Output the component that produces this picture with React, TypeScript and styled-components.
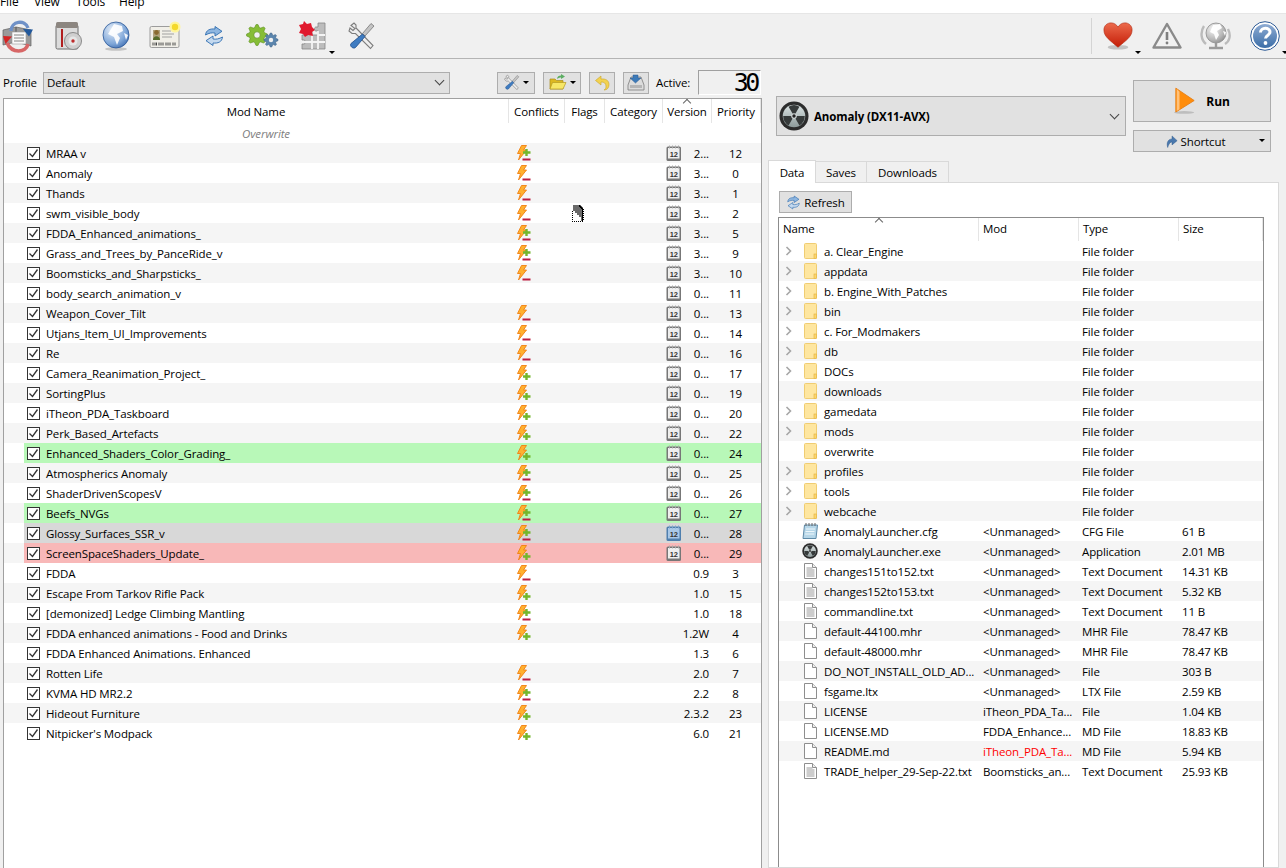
import React from 'react';
import styled, { createGlobalStyle } from 'styled-components';

const GlobalStyle = createGlobalStyle`
  html, body {
    margin: 0;
    height: 868px;
    overflow: hidden;
    background: #f0f0f0;
  }
  body {
    font-family: "Open Sans", "Noto Sans", "Liberation Sans", sans-serif;
    font-size: 11.5px;
    letter-spacing: -0.12px;
    color: #000;
  }
`;

type ConflictKind = 'both' | 'minus' | 'plus' | 'none';
type Tone = 'green' | 'grey' | 'red';

interface ModRow {
  name: string;
  conflict: ConflictKind;
  version: string;
  priority: number;
  dated?: boolean;
  tone?: Tone;
}

const mods: ModRow[] = [
  { name: 'MRAA v', conflict: 'both', version: '2...', priority: 12, dated: true },
  { name: 'Anomaly', conflict: 'minus', version: '3...', priority: 0, dated: true },
  { name: 'Thands', conflict: 'minus', version: '3...', priority: 1, dated: true },
  { name: 'swm_visible_body', conflict: 'minus', version: '3...', priority: 2, dated: true },
  { name: 'FDDA_Enhanced_animations_', conflict: 'both', version: '3...', priority: 5, dated: true },
  { name: 'Grass_and_Trees_by_PanceRide_v', conflict: 'both', version: '3...', priority: 9, dated: true },
  { name: 'Boomsticks_and_Sharpsticks_', conflict: 'minus', version: '3...', priority: 10, dated: true },
  { name: 'body_search_animation_v', conflict: 'none', version: '0...', priority: 11, dated: true },
  { name: 'Weapon_Cover_Tilt', conflict: 'minus', version: '0...', priority: 13, dated: true },
  { name: 'Utjans_Item_UI_Improvements', conflict: 'minus', version: '0...', priority: 14, dated: true },
  { name: 'Re', conflict: 'minus', version: '0...', priority: 16, dated: true },
  { name: 'Camera_Reanimation_Project_', conflict: 'plus', version: '0...', priority: 17, dated: true },
  { name: 'SortingPlus', conflict: 'plus', version: '0...', priority: 19, dated: true },
  { name: 'iTheon_PDA_Taskboard', conflict: 'plus', version: '0...', priority: 20, dated: true },
  { name: 'Perk_Based_Artefacts', conflict: 'plus', version: '0...', priority: 22, dated: true },
  { name: 'Enhanced_Shaders_Color_Grading_', conflict: 'plus', version: '0...', priority: 24, dated: true, tone: 'green' },
  { name: 'Atmospherics Anomaly', conflict: 'both', version: '0...', priority: 25, dated: true },
  { name: 'ShaderDrivenScopesV', conflict: 'both', version: '0...', priority: 26, dated: true },
  { name: 'Beefs_NVGs', conflict: 'both', version: '0...', priority: 27, dated: true, tone: 'green' },
  { name: 'Glossy_Surfaces_SSR_v', conflict: 'both', version: '0...', priority: 28, dated: true, tone: 'grey' },
  { name: 'ScreenSpaceShaders_Update_', conflict: 'plus', version: '0...', priority: 29, dated: true, tone: 'red' },
  { name: 'FDDA', conflict: 'minus', version: '0.9', priority: 3 },
  { name: 'Escape From Tarkov Rifle Pack', conflict: 'plus', version: '1.0', priority: 15 },
  { name: '[demonized] Ledge Climbing Mantling', conflict: 'both', version: '1.0', priority: 18 },
  { name: 'FDDA enhanced animations - Food and Drinks', conflict: 'plus', version: '1.2W', priority: 4 },
  { name: 'FDDA Enhanced Animations. Enhanced', conflict: 'none', version: '1.3', priority: 6 },
  { name: 'Rotten Life', conflict: 'minus', version: '2.0', priority: 7 },
  { name: 'KVMA HD MR2.2', conflict: 'both', version: '2.2', priority: 8 },
  { name: 'Hideout Furniture', conflict: 'plus', version: '2.3.2', priority: 23 },
  { name: "Nitpicker's Modpack", conflict: 'plus', version: '6.0', priority: 21 },
];

type FileKind = 'folder' | 'folderOpenable' | 'cfg' | 'exe' | 'text' | 'blank';

interface FileRow {
  name: string;
  kind: FileKind;
  mod?: string;
  type: string;
  size?: string;
  modRed?: boolean;
}

const folder = (name: string, expandable = true): FileRow => ({
  name,
  kind: expandable ? 'folderOpenable' : 'folder',
  type: 'File folder',
});

const files: FileRow[] = [
  folder('a. Clear_Engine'),
  folder('appdata'),
  folder('b. Engine_With_Patches'),
  folder('bin'),
  folder('c. For_Modmakers'),
  folder('db'),
  folder('DOCs'),
  folder('downloads', false),
  folder('gamedata'),
  folder('mods'),
  folder('overwrite', false),
  folder('profiles'),
  folder('tools'),
  folder('webcache'),
  { name: 'AnomalyLauncher.cfg', kind: 'cfg', mod: '<Unmanaged>', type: 'CFG File', size: '61 B' },
  { name: 'AnomalyLauncher.exe', kind: 'exe', mod: '<Unmanaged>', type: 'Application', size: '2.01 MB' },
  { name: 'changes151to152.txt', kind: 'text', mod: '<Unmanaged>', type: 'Text Document', size: '14.31 KB' },
  { name: 'changes152to153.txt', kind: 'text', mod: '<Unmanaged>', type: 'Text Document', size: '5.32 KB' },
  { name: 'commandline.txt', kind: 'text', mod: '<Unmanaged>', type: 'Text Document', size: '11 B' },
  { name: 'default-44100.mhr', kind: 'blank', mod: '<Unmanaged>', type: 'MHR File', size: '78.47 KB' },
  { name: 'default-48000.mhr', kind: 'blank', mod: '<Unmanaged>', type: 'MHR File', size: '78.47 KB' },
  { name: 'DO_NOT_INSTALL_OLD_AD...', kind: 'blank', mod: '<Unmanaged>', type: 'File', size: '303 B' },
  { name: 'fsgame.ltx', kind: 'blank', mod: '<Unmanaged>', type: 'LTX File', size: '2.59 KB' },
  { name: 'LICENSE', kind: 'blank', mod: 'iTheon_PDA_Ta...', type: 'File', size: '1.04 KB' },
  { name: 'LICENSE.MD', kind: 'blank', mod: 'FDDA_Enhance...', type: 'MD File', size: '18.83 KB' },
  { name: 'README.md', kind: 'blank', mod: 'iTheon_PDA_Ta...', modRed: true, type: 'MD File', size: '5.94 KB' },
  { name: 'TRADE_helper_29-Sep-22.txt', kind: 'text', mod: 'Boomsticks_an...', type: 'Text Document', size: '25.93 KB' },
];

const toneColors: Record<Tone, string> = {
  green: '#b8f8b8',
  grey: '#d8d8d8',
  red: '#f8b8b8',
};

const Page = styled.div`
  height: 868px;
  overflow: hidden;
  display: flex;
  flex-direction: column;
`;

const MenuBar = styled.div`
  height: 13px;
  flex: none;
  background: #fff;
  display: flex;
  align-items: flex-end;
  overflow: hidden;
  line-height: 16px;
`;

const MenuItem = styled.span<{ $w: number }>`
  width: ${(p) => p.$w}px;
  flex: none;
  padding-bottom: 3px;
  font-size: 12px;
`;

const Toolbar = styled.div`
  height: 44px;
  flex: none;
  display: flex;
  align-items: center;
  border-top: 1px solid #e6e6e6;
  border-bottom: 1px solid #b4b4b4;
`;

const ToolGroup = styled.div`
  display: flex;
  margin-left: -7px;
  flex: 1;
`;

const ToolButton = styled.div`
  position: relative;
  width: 49px;
  height: 38px;
  flex: none;
  display: flex;
  align-items: center;
  justify-content: center;
`;

const MenuCaret = styled.span`
  position: absolute;
  right: 1px;
  bottom: 1px;
  width: 0;
  height: 0;
  border-left: 3px solid transparent;
  border-right: 3px solid transparent;
  border-top: 3px solid #000;
`;

const ToolDivider = styled.div`
  width: 1px;
  height: 36px;
  background: #d4d4d4;
  margin-right: 1px;
`;

const RightTools = styled.div`
  display: flex;
  align-items: center;
  margin-right: -3px;
`;

const Main = styled.div`
  flex: 1;
  display: flex;
  min-height: 0;
  padding-left: 3px;
`;

const LeftColumn = styled.div`
  width: 759px;
  flex: none;
  display: flex;
  flex-direction: column;
  padding-top: 11px;
`;

const ProfileRow = styled.div`
  height: 25px;
  display: flex;
  align-items: center;
  flex: none;
  margin-bottom: 3px;
`;

const ProfileLabel = styled.span`
  width: 40px;
  flex: none;
`;

const Select = styled.div`
  width: 407px;
  height: 22px;
  box-sizing: border-box;
  flex: none;
  background: #e1e1e1;
  border: 1px solid #adadad;
  display: flex;
  align-items: center;
  justify-content: space-between;
  padding: 0 6px 0 3px;
`;

const ChevronMark = styled.span`
  width: 6px;
  height: 6px;
  border-right: 1px solid #444;
  border-bottom: 1px solid #444;
  transform: translateY(-2px) rotate(45deg);
`;

const SquareButton = styled.div<{ $w: number; $ml: number }>`
  width: ${(p) => p.$w}px;
  margin-left: ${(p) => p.$ml}px;
  height: 22px;
  box-sizing: border-box;
  flex: none;
  background: #e1e1e1;
  border: 1px solid #adadad;
  display: flex;
  align-items: center;
  justify-content: center;
  gap: 3px;
`;

const DropCaret = styled.span`
  width: 0;
  height: 0;
  border-left: 3px solid transparent;
  border-right: 3px solid transparent;
  border-top: 3px solid #000;
`;

const ActiveLabel = styled.span`
  margin-left: 7px;
  width: 42px;
  flex: none;
`;

const ActiveCount = styled.div`
  width: 63px;
  height: 25px;
  box-sizing: border-box;
  flex: none;
  border: 1px solid #a0a0a0;
  border-right-color: #fff;
  border-bottom-color: #fff;
  display: flex;
  align-items: center;
  justify-content: flex-end;
  overflow: hidden;
  padding-right: 3px;
  font-family: "DejaVu Sans Mono", monospace;
  font-size: 25px;
  letter-spacing: -3.4px;
  line-height: 25px;
`;

const ModList = styled.div`
  flex: 1;
  background: #fff;
  border: 1px solid #a0a0a0;
  border-bottom: none;
`;

const ModGrid = styled.div`
  display: grid;
  grid-template-columns: 505px 56px 40px 58px 49px 49px;
`;

const HeaderCell = styled.div<{ $sorted?: boolean }>`
  position: relative;
  height: 24px;
  display: flex;
  align-items: center;
  justify-content: center;
  border-right: 1px solid #e5e5e5;
  box-sizing: border-box;
  ${(p) =>
    p.$sorted
      ? `&::before {
    content: '';
    position: absolute;
    top: 1px;
    left: 50%;
    width: 5px;
    height: 5px;
    margin-left: -3px;
    border-left: 1px solid #666;
    border-top: 1px solid #666;
    transform: rotate(45deg);
  }`
      : ''}
`;

const OverwriteRow = styled.div`
  height: 20px;
  margin-left: 20px;
  width: 484px;
  display: flex;
  align-items: center;
  justify-content: center;
  font-style: italic;
  color: #808080;
`;

const ModStripe = styled.div<{ $odd: boolean }>`
  height: 20px;
  padding-left: 20px;
  background: ${(p) => (p.$odd ? '#f5f5f5' : '#fff')};
`;

const ModCells = styled.div<{ $tone?: Tone }>`
  height: 20px;
  display: grid;
  grid-template-columns: 484px 56px 40px 58px 49px 49px;
  align-items: center;
  background: ${(p) => (p.$tone ? toneColors[p.$tone] : 'transparent')};
`;

const NameCell = styled.div`
  display: flex;
  align-items: center;
  padding-left: 3px;
  gap: 6px;
  white-space: nowrap;
`;

const CheckBox = styled.span`
  width: 13px;
  height: 13px;
  box-sizing: border-box;
  border: 1px solid #333;
  background: #fff;
  flex: none;
  display: flex;
`;

const ConflictCell = styled.div`
  padding-left: 8px;
  display: flex;
`;

const VersionCell = styled.div<{ $dated: boolean }>`
  display: flex;
  align-items: center;
  justify-content: ${(p) => (p.$dated ? 'space-between' : 'flex-end')};
  padding: 0 2px 0 4px;
`;

const PriorityCell = styled.div`
  text-align: center;
`;

const BusyCursor = styled.div`
  position: absolute;
  left: 571px;
  top: 205px;
  display: flex;
`;

const RightColumn = styled.div`
  width: 511px;
  margin-left: 6px;
  flex: none;
  display: flex;
  flex-direction: column;
  padding-top: 21px;
`;

const RunArea = styled.div`
  display: flex;
  height: 72px;
  flex: none;
  padding-left: 8px;
  margin-bottom: 8px;
`;

const ExecutableSelect = styled.div`
  width: 350px;
  height: 40px;
  box-sizing: border-box;
  margin-top: 16px;
  flex: none;
  background: #e1e1e1;
  border: 1px solid #adadad;
  display: flex;
  align-items: center;
  padding: 0 7px 0 2px;
  gap: 5px;
  font-weight: 700;
  font-size: 11.5px;
`;

const ExecutableName = styled.span`
  flex: 1;
`;

const RunStack = styled.div`
  width: 138px;
  margin-left: 7px;
  flex: none;
  display: flex;
  flex-direction: column;
  gap: 8px;
`;

const RunButton = styled.div`
  height: 42px;
  box-sizing: border-box;
  background: #e1e1e1;
  border: 1px solid #adadad;
  display: flex;
  align-items: center;
  justify-content: center;
  gap: 10px;
  font-weight: 700;
  font-size: 12px;
`;

const ShortcutButton = styled.div`
  position: relative;
  height: 22px;
  box-sizing: border-box;
  background: #e1e1e1;
  border: 1px solid #adadad;
  display: flex;
  align-items: center;
  justify-content: center;
  gap: 3px;
  padding-right: 13px;
`;

const ShortcutCaret = styled(DropCaret)`
  position: absolute;
  right: 5px;
  top: 8px;
`;

const Tabs = styled.div`
  display: flex;
  height: 23px;
  flex: none;
  align-items: flex-end;
  position: relative;
  margin-bottom: -1px;
`;

const Tab = styled.div<{ $active?: boolean; $w: number }>`
  width: ${(p) => p.$w}px;
  height: ${(p) => (p.$active ? 23 : 22)}px;
  box-sizing: border-box;
  display: flex;
  align-items: center;
  justify-content: center;
  border: 1px solid #d9d9d9;
  border-left: ${(p) => (p.$active ? '1px solid #d9d9d9' : 'none')};
  border-bottom: ${(p) => (p.$active ? 'none' : '1px solid #d9d9d9')};
  background: ${(p) => (p.$active ? '#fff' : '#f0f0f0')};
  position: relative;
  z-index: ${(p) => (p.$active ? 1 : 0)};
`;

const TabPane = styled.div`
  flex: 1;
  background: #fff;
  border: 1px solid #d9d9d9;
  padding: 8px 14px 0 9px;
  display: flex;
  flex-direction: column;
`;

const RefreshButton = styled.div`
  width: 73px;
  height: 22px;
  box-sizing: border-box;
  flex: none;
  background: #e1e1e1;
  border: 1px solid #adadad;
  display: flex;
  align-items: center;
  justify-content: center;
  gap: 3px;
  margin: 0 0 4px 1px;
`;

const FileTree = styled.div`
  flex: 1;
  border: 1px solid #8c8c8c;
  border-bottom: none;
`;

const FileGrid = styled.div`
  display: grid;
  grid-template-columns: 200px 100px 100px 1fr;
`;

const TreeHeader = styled.div<{ $sorted?: boolean }>`
  position: relative;
  height: 23px;
  box-sizing: border-box;
  padding-left: 4px;
  display: flex;
  align-items: flex-end;
  padding-bottom: 5px;
  border-right: 1px solid #e5e5e5;
  ${(p) =>
    p.$sorted
      ? `&::before {
    content: '';
    position: absolute;
    top: 1px;
    left: 97px;
    width: 5px;
    height: 5px;
    border-left: 1px solid #666;
    border-top: 1px solid #666;
    transform: rotate(45deg);
  }`
      : ''}
`;

const FileRowLine = styled.div<{ $odd: boolean }>`
  height: 20px;
  display: grid;
  grid-template-columns: 199px 100px 100px 1fr;
  align-items: center;
  background: ${(p) => (p.$odd ? '#f5f5f5' : '#fff')};
`;

const FileName = styled.div`
  display: flex;
  align-items: center;
  white-space: nowrap;
`;

const Twisty = styled.span`
  width: 25px;
  flex: none;
  display: flex;
  padding-left: 6px;
  box-sizing: border-box;
`;

const FileIconBox = styled.span`
  width: 20px;
  flex: none;
  display: flex;
`;

const OffsetIcon = styled.span`
  margin-left: -2px;
  display: flex;
`;

const FileCell = styled.div<{ $red?: boolean; $pad: number }>`
  padding-left: ${(p) => p.$pad}px;
  color: ${(p) => (p.$red ? '#ff0000' : '#000')};
  white-space: nowrap;
`;

const ConflictIcon = ({ kind }: { kind: ConflictKind }) => {
  if (kind === 'none') return <svg width="15" height="16" />;
  return (
    <svg width="15" height="16" viewBox="0 0 15 16">
      <polygon points="5.500,0.500 10.500,0.500 7.500,5 10.500,5 2.500,15 4.500,8.500 1.500,8.500" fill="#ffb02e" stroke="#f07f12" strokeWidth="0.9" />
      {kind !== 'plus' && <rect x="6.500" y="13.500" width="8" height="2" fill="#bd1d3f" />}
      {kind === 'both' && <path d="M10.500 4v7M7 7.500h7.500" stroke="#74b62c" strokeWidth="2.400" />}
      {kind === 'plus' && <path d="M10.500 8v7M7 11.500h7.500" stroke="#74b62c" strokeWidth="2.400" />}
    </svg>
  );
};

const CalendarIcon = ({ selected }: { selected: boolean }) => (
  <svg width="16" height="17" viewBox="0 0 16 17">
    <rect x="0.500" y="1.500" width="14.500" height="14.500" rx="1.500" fill={selected ? '#4f7fae' : '#777'} />
    <rect x="2" y="3" width="11.500" height="10.500" fill={selected ? '#a9c8e8' : '#efefef'} />
    <path d="M3.500 .5v3M6.500 .5v3M9.500 .5v3M12.500 .5v3" stroke={selected ? '#7fa5cc' : '#aaa'} />
    <text x="7.700" y="11.500" fontSize="7.500" fontWeight="700" textAnchor="middle" fill="#333" fontFamily="Liberation Sans, sans-serif">12</text>
  </svg>
);

const CheckMark = () => (
  <svg width="11" height="11" viewBox="0 0 11 11">
    <path d="M1.500 5.500l3 3 5-7" fill="none" stroke="#333" strokeWidth="1.300" />
  </svg>
);

const TwistyMark = () => (
  <svg width="8" height="10" viewBox="0 0 8 10">
    <path d="M1.500 1l4 4-4 4" fill="none" stroke="#a6a6a6" strokeWidth="1.600" />
  </svg>
);

const FolderIcon = () => (
  <svg width="13" height="16" viewBox="0 0 13 16">
    <rect x="0.500" y="0.500" width="12" height="15" rx="1" fill="#fee6a0" stroke="#f0cd72" />
    <rect x="10" y="11" width="2.500" height="4.500" fill="#fbd570" stroke="#e3b23c" strokeWidth="0.600" />
  </svg>
);

const BlankFileIcon = ({ lines }: { lines: boolean }) => (
  <svg width="13" height="16" viewBox="0 0 13 16">
    <path d="M0.500 0.500h8l4 4v11h-12z" fill="#fff" stroke="#8e8e8e" />
    <path d="M8.500 0.500v4h4" fill="#eee" stroke="#8e8e8e" />
    {lines && <path d="M2.500 5h6M2.500 7h8M2.500 9h8M2.500 11h8M2.500 13h8" stroke="#9a9a9a" />}
  </svg>
);

const NotepadIcon = () => (
  <OffsetIcon>
    <svg width="16" height="16" viewBox="0 0 16 16">
      <path d="M2.500 2h13l-1.500 13.500H1z" fill="#b6d6e8" stroke="#5e8aa8" />
      <path d="M4 0v3M7 0v3M10 0v3M13 0v3" stroke="#666" />
      <path d="M4 6h9M3.500 8.500h9M3.200 11h9" stroke="#eef7fb" />
    </svg>
  </OffsetIcon>
);

const RadiationDisc = ({ size }: { size: number }) => (
  <svg width={size} height={size} viewBox="0 0 32 32">
    <defs>
      <linearGradient id={`rad${size}`} x1="0" y1="0" x2="0" y2="1">
        <stop offset="0" stopColor="#dce4e4" />
        <stop offset="1" stopColor="#8d9a9a" />
      </linearGradient>
    </defs>
    <circle cx="16" cy="16" r="15.500" fill="#2c2c2c" />
    <circle cx="16" cy="16" r="12" fill={`url(#rad${size})`} />
    <path d="M16 16L27.500 16A11.500 11.500 0 0 1 21.800 26zM16 16L10.200 26A11.500 11.500 0 0 1 4.500 16zM16 16L10.200 6A11.500 11.500 0 0 1 21.800 6z" fill="#363a3a" />
    <circle cx="16" cy="16" r="3" fill="#cfd6d6" />
    <circle cx="16" cy="16" r="1.800" fill="#222" />
  </svg>
);

const SwapIcon = () => (
  <svg width="32" height="36" viewBox="0 0 32 36">
    <path d="M1 12l13-3v15L1 27zM14 9l15 3v16l-15-4z" fill="#9a9a9a" stroke="#5f5f5f" strokeWidth="0.700" />
    <rect x="10" y="14" width="14" height="12" fill="#fafafa" stroke="#999" strokeWidth="0.600" />
    <path d="M12 17h10M12 20h10M12 23h10" stroke="#777" strokeWidth="0.900" />
    <path d="M9 13C9 3 23 1 26 10" fill="none" stroke="#6f91c7" strokeWidth="3.400" />
    <path d="M21 11l10 .5-4 7z" fill="#21589c" />
    <path d="M26 26C24 35 10 36 5 25" fill="none" stroke="#d76767" strokeWidth="3.600" />
    <path d="M1 18l9 .5-6.500 7.500z" fill="#d42424" />
  </svg>
);

const InstallIcon = () => (
  <svg width="28" height="30" viewBox="0 0 28 30" style={{ marginLeft: 4 }}>
    <rect x="1" y="4" width="22" height="24" rx="1.500" fill="#dcdcdc" stroke="#6d6d6d" />
    <rect x="1" y="1" width="22" height="6" rx="1.500" fill="#8c8680" />
    <rect x="6" y="8" width="2" height="18" fill="#b11f1f" />
    <circle cx="18" cy="20" r="8.500" fill="#cfcfcf" stroke="#8a8a8a" />
    <circle cx="18" cy="20" r="4.500" fill="#e6e6e6" />
    <circle cx="18" cy="20" r="1.700" fill="#bd2a2a" />
  </svg>
);

const GlobeIcon = ({ grey }: { grey?: boolean }) => (
  <svg width="32" height="30" viewBox="0 0 32 30">
    <defs>
      <radialGradient id={grey ? 'globeG' : 'globeB'} cx="0.350" cy="0.300" r="0.900">
        <stop offset="0" stopColor={grey ? '#f4f4f4' : '#e4edf8'} />
        <stop offset="0.600" stopColor={grey ? '#b5b5b5' : '#7ea6d8'} />
        <stop offset="1" stopColor={grey ? '#777' : '#27569f'} />
      </radialGradient>
    </defs>
    {!grey && <ellipse cx="16" cy="28" rx="11" ry="1.800" fill="#c4c4c4" />}
    {grey && <path d="M4 5C0 11 1 19 6 23M28 8C31 14 30 20 25 23" fill="none" stroke="#bbb" strokeWidth="2.400" />}
    <circle cx="16" cy={grey ? 12 : 14} r={grey ? 10 : 13} fill={`url(#${grey ? 'globeG' : 'globeB'})`} stroke={grey ? '#8c8c8c' : '#2a5797'} strokeWidth="0.800" />
    <path
      d={grey ? 'M13 4l7-1 2 4-5 3 2 4-3 5-2-6-4-2zM23 10l3 1-1 4z' : 'M14 3l8 2 1 5-6 3 3 4-3 7-3-8-6-3 3-5zM24 12l4 2-2 5z'}
      fill="#fff"
      opacity={grey ? 0.95 : 0.9}
    />
    {grey && <path d="M16 22v4M9 27h14" stroke="#9a9a9a" strokeWidth="2.400" />}
  </svg>
);

const IdCardIcon = () => (
  <svg width="32" height="30" viewBox="0 0 32 30">
    <rect x="1" y="5.500" width="29" height="21" rx="1.500" fill="#f1efe8" stroke="#9c9c9c" />
    <rect x="4" y="9" width="7" height="10" fill="#b0a27d" />
    <circle cx="7.500" cy="11.500" r="2.400" fill="#8a6a30" />
    <path d="M4 19c0-5 7-5 7 0z" fill="#556b2a" />
    <path d="M13 10h9M13 13h12M13 16h10" stroke="#999" strokeWidth="0.900" />
    <path d="M4 21.500v3M6 21.500v3M7.500 21.500v3M10 21.500v3M12 21.500v3M14 21.500v3M17 21.500v3M19 21.500v3M21 21.500v3M24 21.500v3M26 21.500v3" stroke="#444" />
    <circle cx="26" cy="6" r="5.500" fill="#fff59a" />
    <circle cx="26" cy="6" r="3.200" fill="#f4d92a" />
  </svg>
);

const RefreshIcon = ({ size }: { size: number }) => (
  <svg width={size} height={size} viewBox="0 0 22 22">
    <path d="M2.500 10C3 5 7 3.500 12 4V1.500l7 4.800-7 4.700V8C9 7.500 6 8 2.500 10z" fill="#8eb6e0" stroke="#2f6db0" strokeWidth="0.900" />
    <path d="M19.500 12C19 17 15 18.500 10 18v2.500l-7-4.800 7-4.700V14c3 .5 6 0 9.500-2z" fill="#c4d9ef" stroke="#2f6db0" strokeWidth="0.900" />
  </svg>
);

const gearPath = (cx: number, cy: number, r: number, teeth: number) => {
  const points: string[] = [];
  for (let i = 0; i < teeth * 4; i += 1) {
    const radius = i % 4 < 2 ? r : r * 0.75;
    const angle = ((i - 0.5) * Math.PI * 2) / (teeth * 4);
    points.push(`${(cx + radius * Math.cos(angle)).toFixed(1)},${(cy + radius * Math.sin(angle)).toFixed(1)}`);
  }
  return points.join(' ');
};

const GearsIcon = () => (
  <svg width="33" height="24" viewBox="0 0 33 24">
    <polygon points={gearPath(11, 11, 10.5, 8)} fill="#86bd36" stroke="#5d8d1e" strokeWidth="0.600" />
    <circle cx="11" cy="11" r="3.200" fill="#f0f0f0" stroke="#5d8d1e" strokeWidth="0.600" />
    <polygon points={gearPath(25, 16, 7, 8)} fill="#5b85ad" stroke="#3f658a" strokeWidth="0.600" />
    <circle cx="25" cy="16" r="2.200" fill="#f0f0f0" />
  </svg>
);

const PuzzleIcon = () => (
  <svg width="28" height="30" viewBox="0 0 28 30">
    <path d="M4 14h6v-3c0-2 4-2 4 0v3h6v-4h-2c-2 0-2-4 0-4h2V2h7v26H4v-5h2c2 0 2-4 0-4H4z" fill="#bcbcbc" stroke="#858585" strokeWidth="0.800" />
    <path d="M14 14v14M20 10v18M4 21h23M20 14h7" stroke="#f4f4f4" strokeWidth="1.800" />
    <path d="M1 4l4-1 1-3 3 3 4-1 1 4 3 3-3 2 1 4-5-1-3 2-2-3-4-1 2-4z" fill="#e0192d" />
  </svg>
);

const ToolsIcon = ({ size }: { size: number }) => (
  <svg width={size} height={size} viewBox="0 0 30 30">
    <path d="M5 4.500l3-2.500 2 2v3l2.500 2.500L27 24.500l-2.500 3L9.500 12.500H6l-3-2.500 1-3 3 2.500 2-2z" fill="#eeeeee" stroke="#7c7c7c" strokeWidth="1.100" />
    <path d="M25 2.500l3 2.500-9 10-2.500-2.500z" fill="#c4c4c4" stroke="#777" strokeWidth="0.800" />
    <path d="M16.500 13l2.500 2.500-9.500 11c-2 2-6.500-1.500-4.500-4z" fill="#3f7cc1" stroke="#1d4d8a" strokeWidth="0.800" />
  </svg>
);

const HeartIcon = () => (
  <svg width="30" height="32" viewBox="0 0 32 32">
    <defs>
      <linearGradient id="heart" x1="0" y1="0" x2="0" y2="1">
        <stop offset="0" stopColor="#ec6a4c" />
        <stop offset="1" stopColor="#c41c06" />
      </linearGradient>
    </defs>
    <ellipse cx="16" cy="28" rx="11" ry="2.500" fill="#c2c2c2" />
    <path d="M16 28C8 21 1 17 1 9.500 1 4.500 5 2 8.500 2 12 2 14.500 4 16 6.500 17.500 4 20 2 23.500 2 27 2 31 4.500 31 9.500 31 17 24 21 16 28z" fill="url(#heart)" stroke="#b32a12" strokeWidth="0.700" />
  </svg>
);

const WarningIcon = () => (
  <svg width="30" height="28" viewBox="0 0 30 28">
    <path d="M15 2L28.500 25.500H1.500z" fill="#f1f1f1" stroke="#8a8a8a" strokeWidth="2.400" strokeLinejoin="round" />
    <path d="M15 10v8" stroke="#7f7f7f" strokeWidth="2.600" />
    <circle cx="15" cy="21" r="1.400" fill="#7f7f7f" />
  </svg>
);

const HelpIcon = () => (
  <svg width="30" height="30" viewBox="0 0 30 30">
    <defs>
      <linearGradient id="help" x1="0" y1="0" x2="0" y2="1">
        <stop offset="0" stopColor="#8eabd2" />
        <stop offset="1" stopColor="#3c6ea8" />
      </linearGradient>
    </defs>
    <circle cx="15" cy="15" r="14.300" fill="#fff" stroke="#2d5a96" />
    <circle cx="15" cy="15" r="12" fill="url(#help)" />
    <path d="M10.500 11.500c0-5.500 9.500-5.500 9.500-.5 0 3.500-4.500 3.500-4.500 6.500" fill="none" stroke="#fff" strokeWidth="3" />
    <circle cx="15.500" cy="22" r="1.900" fill="#fff" />
  </svg>
);

const FolderOpenIcon = () => (
  <svg width="18" height="17" viewBox="0 0 18 17">
    <path d="M1 5h5l1.500 1.500H14V15H1z" fill="#ddb820" stroke="#a98e1c" strokeWidth="0.700" />
    <path d="M1 15l2.500-6.500H17L14 15z" fill="#f7e767" stroke="#b59a22" strokeWidth="0.700" />
    <path d="M8 5c0-2.500 2-3.500 4-3.500V0l4 2.500L12 5V3.500C10.500 3.500 9.500 4 8 5z" fill="#5cad63" />
  </svg>
);

const UndoIcon = () => (
  <svg width="16" height="16" viewBox="0 0 16 16">
    <path d="M7 1L1.500 5.500 7 10V7c3 0 5 1 5 5 0 1.500-1 2.500-2 3 3 0 5-2 5-5.500C15 5 11 3.500 7 4z" fill="#f2d24f" stroke="#c9a526" strokeWidth="0.600" />
  </svg>
);

const TrayIcon = () => (
  <svg width="18" height="17" viewBox="0 0 18 17">
    <path d="M4 3h10l3 8v5H1v-5z" fill="#dcdcdc" stroke="#7b7b7b" strokeWidth="0.800" />
    <rect x="3" y="11" width="12" height="3" fill="#b5b5b5" />
    <path d="M6 1h5v3h3l-5.500 5L3 4h3z" fill="#3c7ab8" stroke="#2a5a90" strokeWidth="0.500" />
  </svg>
);

const PlayIcon = () => (
  <svg width="22" height="30" viewBox="0 0 24 30">
    <ellipse cx="11" cy="27.500" rx="11" ry="1.500" fill="#bdbdbd" />
    <path d="M2 1l20 13.500L2 27z" fill="#ff8d0c" stroke="#e77f14" />
    <path d="M3 2v24l3-2V5z" fill="#ffc17a" />
  </svg>
);

const ShortcutArrow = () => (
  <svg width="12" height="15" viewBox="0 0 14 16">
    <path d="M2 15C0 9 3 5 7 5V1.500L13 7l-6 5V8.500C5 8.500 3 11 2 15z" fill="#4a78ad" stroke="#2e5a8c" strokeWidth="0.500" />
  </svg>
);

const CursorGlyph = () => (
  <svg width="13" height="17" viewBox="0 0 13 17" shapeRendering="crispEdges">
    <path d="M2 0h7l3 3v13H1z" fill="#6a6a6a" />
    <path d="M1 6h3v2h2v2h2v2h2v4H1z" fill="#fff" />
    <path d="M1 6v10h11V3" fill="none" stroke="#000" strokeWidth="1" strokeDasharray="1 1" />
    <path d="M8 0l4 4v12h-1V5L7 1z" fill="#000" />
  </svg>
);

const iconForFile = (kind: FileKind) => {
  if (kind === 'folder' || kind === 'folderOpenable') return <FolderIcon />;
  if (kind === 'cfg') return <NotepadIcon />;
  if (kind === 'exe') return <OffsetIcon><RadiationDisc size={16} /></OffsetIcon>;
  return <BlankFileIcon lines={kind === 'text'} />;
};

export default function App(): React.JSX.Element {
  return (
    <Page>
      <GlobalStyle />
      <MenuBar>
        <MenuItem $w={34}>File</MenuItem>
        <MenuItem $w={42}>View</MenuItem>
        <MenuItem $w={43}>Tools</MenuItem>
        <MenuItem $w={40}>Help</MenuItem>
      </MenuBar>
      <Toolbar>
        <ToolGroup>
          <ToolButton><SwapIcon /></ToolButton>
          <ToolButton><InstallIcon /></ToolButton>
          <ToolButton><GlobeIcon /></ToolButton>
          <ToolButton><IdCardIcon /></ToolButton>
          <ToolButton><RefreshIcon size={22} /></ToolButton>
          <ToolButton><GearsIcon /></ToolButton>
          <ToolButton><PuzzleIcon /><MenuCaret /></ToolButton>
          <ToolButton><ToolsIcon size={30} /></ToolButton>
        </ToolGroup>
        <RightTools>
          <ToolDivider />
          <ToolButton><HeartIcon /><MenuCaret /></ToolButton>
          <ToolButton><WarningIcon /></ToolButton>
          <ToolButton><GlobeIcon grey /></ToolButton>
          <ToolButton><HelpIcon /><MenuCaret /></ToolButton>
        </RightTools>
      </Toolbar>
      <Main>
        <LeftColumn>
          <ProfileRow>
            <ProfileLabel>Profile</ProfileLabel>
            <Select>
              Default
              <ChevronMark />
            </Select>
            <SquareButton $w={38} $ml={47}><ToolsIcon size={17} /><DropCaret /></SquareButton>
            <SquareButton $w={38} $ml={8}><FolderOpenIcon /><DropCaret /></SquareButton>
            <SquareButton $w={26} $ml={8}><UndoIcon /></SquareButton>
            <SquareButton $w={26} $ml={8}><TrayIcon /></SquareButton>
            <ActiveLabel>Active:</ActiveLabel>
            <ActiveCount>30</ActiveCount>
          </ProfileRow>
          <ModList>
            <ModGrid>
              <HeaderCell>Mod Name</HeaderCell>
              <HeaderCell>Conflicts</HeaderCell>
              <HeaderCell>Flags</HeaderCell>
              <HeaderCell>Category</HeaderCell>
              <HeaderCell $sorted>Version</HeaderCell>
              <HeaderCell>Priority</HeaderCell>
            </ModGrid>
            <OverwriteRow>Overwrite</OverwriteRow>
            {mods.map((mod, index) => (
              <ModStripe key={mod.name} $odd={index % 2 === 0}>
                <ModCells $tone={mod.tone}>
                  <NameCell>
                    <CheckBox><CheckMark /></CheckBox>
                    {mod.name}
                  </NameCell>
                  <ConflictCell><ConflictIcon kind={mod.conflict} /></ConflictCell>
                  <div />
                  <div />
                  <VersionCell $dated={Boolean(mod.dated)}>
                    {mod.dated && <CalendarIcon selected={mod.tone === 'grey'} />}
                    <span>{mod.version}</span>
                  </VersionCell>
                  <PriorityCell>{mod.priority}</PriorityCell>
                </ModCells>
              </ModStripe>
            ))}
          </ModList>
        </LeftColumn>
        <RightColumn>
          <RunArea>
            <ExecutableSelect>
              <RadiationDisc size={30} />
              <ExecutableName>Anomaly (DX11-AVX)</ExecutableName>
              <ChevronMark />
            </ExecutableSelect>
            <RunStack>
              <RunButton><PlayIcon />Run</RunButton>
              <ShortcutButton><ShortcutArrow />Shortcut<ShortcutCaret /></ShortcutButton>
            </RunStack>
          </RunArea>
          <Tabs>
            <Tab $active $w={48}>Data</Tab>
            <Tab $w={51}>Saves</Tab>
            <Tab $w={82}>Downloads</Tab>
          </Tabs>
          <TabPane>
            <RefreshButton><RefreshIcon size={15} />Refresh</RefreshButton>
            <FileTree>
              <FileGrid>
                <TreeHeader $sorted>Name</TreeHeader>
                <TreeHeader>Mod</TreeHeader>
                <TreeHeader>Type</TreeHeader>
                <TreeHeader>Size</TreeHeader>
              </FileGrid>
              {files.map((file, index) => (
                <FileRowLine key={file.name} $odd={index % 2 === 1}>
                  <FileName>
                    <Twisty>{file.kind === 'folderOpenable' && <TwistyMark />}</Twisty>
                    <FileIconBox>{iconForFile(file.kind)}</FileIconBox>
                    {file.name}
                  </FileName>
                  <FileCell $pad={5} $red={file.modRed}>{file.mod}</FileCell>
                  <FileCell $pad={4}>{file.type}</FileCell>
                  <FileCell $pad={4}>{file.size}</FileCell>
                </FileRowLine>
              ))}
            </FileTree>
          </TabPane>
        </RightColumn>
      </Main>
      <BusyCursor><CursorGlyph /></BusyCursor>
    </Page>
  );
}
